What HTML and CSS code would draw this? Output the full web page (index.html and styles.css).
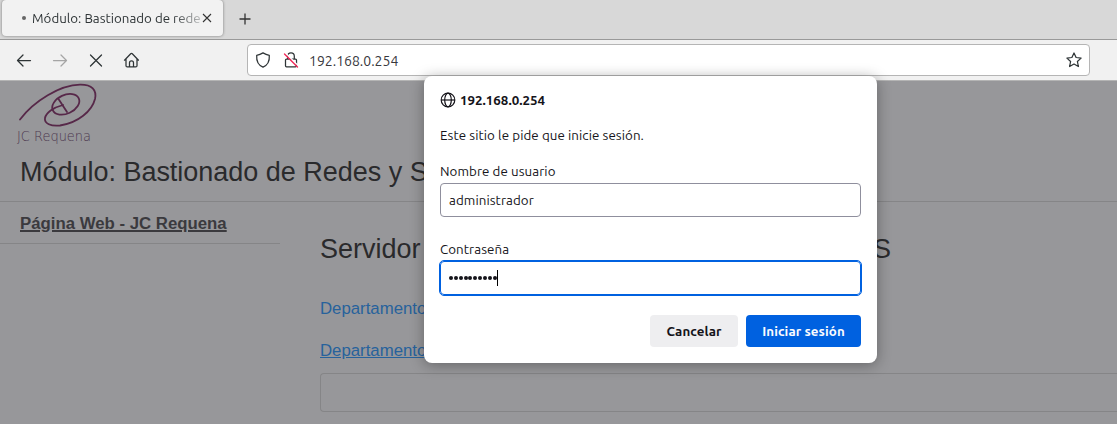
FILE: index.html
```html
<!DOCTYPE html>
<html lang="es">
<head>
<meta charset="utf-8">
<title>Módulo: Bastionado de Redes</title>
<link rel="stylesheet" href="styles.css">
</head>
<body>
<div class="tabs">
  <div class="tab"><i class="busy"></i><span class="tab-title">Módulo: Bastionado de rede</span>
    <svg class="tab-close" width="10" height="10" viewBox="0 0 10 10"><path d="M1 1l8 8M9 1l-8 8"/></svg></div>
  <svg class="plus" width="12" height="12" viewBox="0 0 12 12"><path d="M6 .5v11M.5 6h11"/></svg>
</div>
<div class="toolbar">
  <svg class="ico" width="16" height="16" viewBox="0 0 16 16"><path d="M14.500 8.500H1.500M7 3L1.500 8.500L7 14"/></svg>
  <svg class="ico off" width="16" height="16" viewBox="0 0 16 16"><path d="M1.500 8.500h13M9 3L14.500 8.500L9 14"/></svg>
  <svg class="ico" width="16" height="16" viewBox="0 0 16 16"><path d="M2.500 3l11 11M13.500 3l-11 11"/></svg>
  <svg class="ico home" width="16" height="16" viewBox="0 0 16 16"><path d="M1.500 8.200L7.700 1.800a1.100 1.100 0 0 1 1.600 0L15.500 8.200M3 7v6.700a1.200 1.200 0 0 0 1.200 1.200h8.600a1.200 1.200 0 0 0 1.200-1.200V7M6.500 14.800v-4a2 2 0 0 1 4 0v4"/></svg>
  <div class="urlbar">
    <svg class="ico shield" width="16" height="16" viewBox="0 0 16 16"><path d="M8 .9Q11 2.700 14.300 3.400C14.700 9 12.500 13.300 8 15.200C3.500 13.300 1.300 9 1.700 3.400Q5 2.700 8 .9Z"/></svg>
    <svg class="ico lock" width="16" height="16" viewBox="0 0 16 16"><path d="M4.700 7V4.200a3.300 3.300 0 0 1 6.600 0V7M3.500 7h9a1 1 0 0 1 1 1v5.800a1 1 0 0 1-1 1h-9a1 1 0 0 1-1-1V8a1 1 0 0 1 1-1z"/><path class="halo" d="M2.800 1.300L15.800 14.300"/><path class="slash" d="M1.500 2L14.500 15"/></svg>
    <span class="address">192.168.0.254</span>
    <svg class="ico star" width="16" height="16" viewBox="0 0 16 16"><path d="M8 1l2.100 4.500 5 .6-3.700 3.400 1 5L8 12l-4.400 2.500 1-5L.9 6.100l5-.6z"/></svg>
  </div>
</div>
<div class="page">
  <header>
    <svg class="logo" width="90" height="68" viewBox="14 80 90 68">
      <path class="swirl" d="M20 119.500C34 101 60 85 80 84.700C92 84.500 97 90 95 99C92 111 78 123 60 125.500C51 126.500 44 123.500 45 118C46 113 53 107.500 63 105"/>
      <ellipse class="swirl" cx="65.800" cy="104.300" rx="14.300" ry="9.300" transform="rotate(-25 65.800 104.300)"/>
      <path class="swirl" d="M58.500 99L67 112"/>
      <text x="17" y="141" textLength="74" lengthAdjust="spacingAndGlyphs">JC Requena</text>
    </svg>
    <h1>Módulo: Bastionado de Redes y S</h1>
  </header>
  <div class="columns">
    <nav><a>Página Web - JC Requena</a></nav>
    <main>
      <h2><span>Servidor</span><span>S</span></h2>
      <a class="dept">Departamento</a>
      <a class="dept under">Departamento</a>
      <div class="well"></div>
    </main>
  </div>
</div>
<div class="dialog">
  <div class="host"><svg width="16" height="16" viewBox="0 0 16 16"><circle cx="8" cy="8" r="6.800"/><ellipse cx="8" cy="8" rx="3.300" ry="6.800"/><path d="M1.200 8h13.600"/></svg><b>192.168.0.254</b></div>
  <p class="prompt">Este sitio le pide que inicie sesión.</p>
  <div class="label user">Nombre de usuario</div>
  <div class="field">administrador</div>
  <div class="label pass">Contraseña</div>
  <div class="field focus"><span class="dots"><i></i><i></i><i></i><i></i><i></i><i></i><i></i><i></i><i></i><i></i></span><i class="caret"></i></div>
  <div class="buttons"><div class="btn cancel">Cancelar</div><div class="btn primary">Iniciar sesión</div></div>
</div>
</body>
</html>
```
FILE: styles.css
```css
* { box-sizing: border-box; }
body { margin: 0; width: 1117px; height: 424px; overflow: hidden; background: #97979a; font: 13.333px/18px Ubuntu, "Noto Sans", sans-serif; letter-spacing: .08px; color: #15141a; }
svg { flex: none; fill: none; }
.tabs { height: 40px; background: #d8d8d8; border-bottom: 1px solid #999; display: flex; align-items: flex-start; }
.tab { width: 221px; height: 36px; margin-left: 2px; background: #f2f2f2; border-radius: 4px; box-shadow: 0 0 3px rgba(0,0,0,.45); display: flex; align-items: center; padding-left: 20px; }
.busy { width: 4px; height: 4px; border-radius: 50%; background: #666; margin-right: 6px; }
.tab-title { width: 170px; padding-top: 2px; letter-spacing: 0; white-space: nowrap; color: #2e3436; -webkit-mask-image: linear-gradient(90deg, #000 140px, transparent 180px); mask-image: linear-gradient(90deg, #000 140px, transparent 180px); }
.tab-close, .plus { stroke: #333; stroke-width: 1.1; }
.plus { margin: 13px 0 0 16px; stroke-width: 1.3; }
.toolbar { height: 41px; background: #f1f1f1; border-bottom: 1px solid #b4b4b4; display: flex; align-items: center; padding-left: 16px; gap: 20px; }
.ico { stroke: #2e3436; stroke-width: 1.25; stroke-linecap: round; stroke-linejoin: round; }
.off { stroke: #a5a5a5; }
.home { margin-left: -1px; }
.urlbar { width: 843px; height: 32px; margin-left: 88px; background: #fff; border: 1px solid #b5b5b5; border-radius: 4px; display: flex; align-items: center; padding: 0 7px; }
.lock { margin-left: 12px; }
.halo { stroke: #fff; stroke-width: 1.4; }
.slash { stroke: #f02858; stroke-width: 1.4; }
.address { margin-left: 10px; padding-top: 1px; font-size: 14px; letter-spacing: 0; color: #38383d; }
.star { margin-left: auto; }
.page { height: 343px; font-family: "Liberation Sans", Arial, sans-serif; letter-spacing: 0; color: #2a2a2c; }
header { display: flow-root; height: 121px; border-bottom: 1px solid #858587; }
.logo { display: block; margin: -1px 0 0 14px; }
.swirl { stroke: #572849; stroke-width: 1.8; stroke-linecap: round; }
.logo text { font: 200 14px "DejaVu Sans", sans-serif; fill: #4d3850; }
h1, h2 { margin: 0; font-size: 27px; line-height: 32px; font-weight: 400; white-space: nowrap; }
h1 { margin: 8px 0 0 20px; letter-spacing: -.02px; }
.columns { display: flex; }
nav { width: 280px; height: 42px; border-bottom: 1px solid #858587; padding: 12px 0 0 20px; font-weight: 700; font-size: 16.8px; line-height: 20px; color: #3b3a3e; white-space: nowrap; text-decoration: underline; text-decoration-thickness: 2px; }
main { flex: 1; padding: 31px 0 0 40px; }
h2 { width: 571px; display: flex; justify-content: space-between; }
.dept { display: block; width: max-content; font-size: 16.8px; line-height: 20px; color: #27629c; margin-top: 34px; }
.under { text-decoration: underline; margin-top: 22px; }
.well { height: 39px; margin-top: 12px; border: 1px solid #858587; border-right: 0; border-radius: 4px 0 0 4px; }
.dialog { position: absolute; left: 424px; top: 76px; width: 453px; height: 287px; background: #fff; border-radius: 8px; box-shadow: 0 2px 14px rgba(20,20,20,.38); padding: 15px 16px 16px; }
.host { height: 18px; display: flex; align-items: center; gap: 4px; letter-spacing: 0; }
.host b { padding-top: 2px; }
.host svg { stroke: #15141a; stroke-width: 1.2; }
.prompt { margin: 18px 0 17px; }
.label { height: 21px; padding-top: 1px; }
.field { width: 421px; height: 34px; border: 1px solid #8f8f9d; border-radius: 4px; display: flex; align-items: center; padding: 2px 0 0 8px; }
.pass { margin-top: 23px; }
.focus { padding-top: 0; outline: 1px solid #0061e0; border-color: #0061e0; }
.dots { display: flex; gap: .85px; margin-right: .4px; }
.dots i { width: 4px; height: 4px; border-radius: 50%; background: #15141a; }
.caret { width: 1px; height: 16px; background: #000; }
.buttons { margin-top: 20px; display: flex; justify-content: flex-end; gap: 8px; }
.btn { height: 32px; border-radius: 4px; display: flex; align-items: center; justify-content: center; padding-top: 2px; font-weight: 700; }
.cancel { width: 88px; background: #eeeef0; }
.primary { width: 115px; background: #0061e0; color: #fbfbfe; }
```
